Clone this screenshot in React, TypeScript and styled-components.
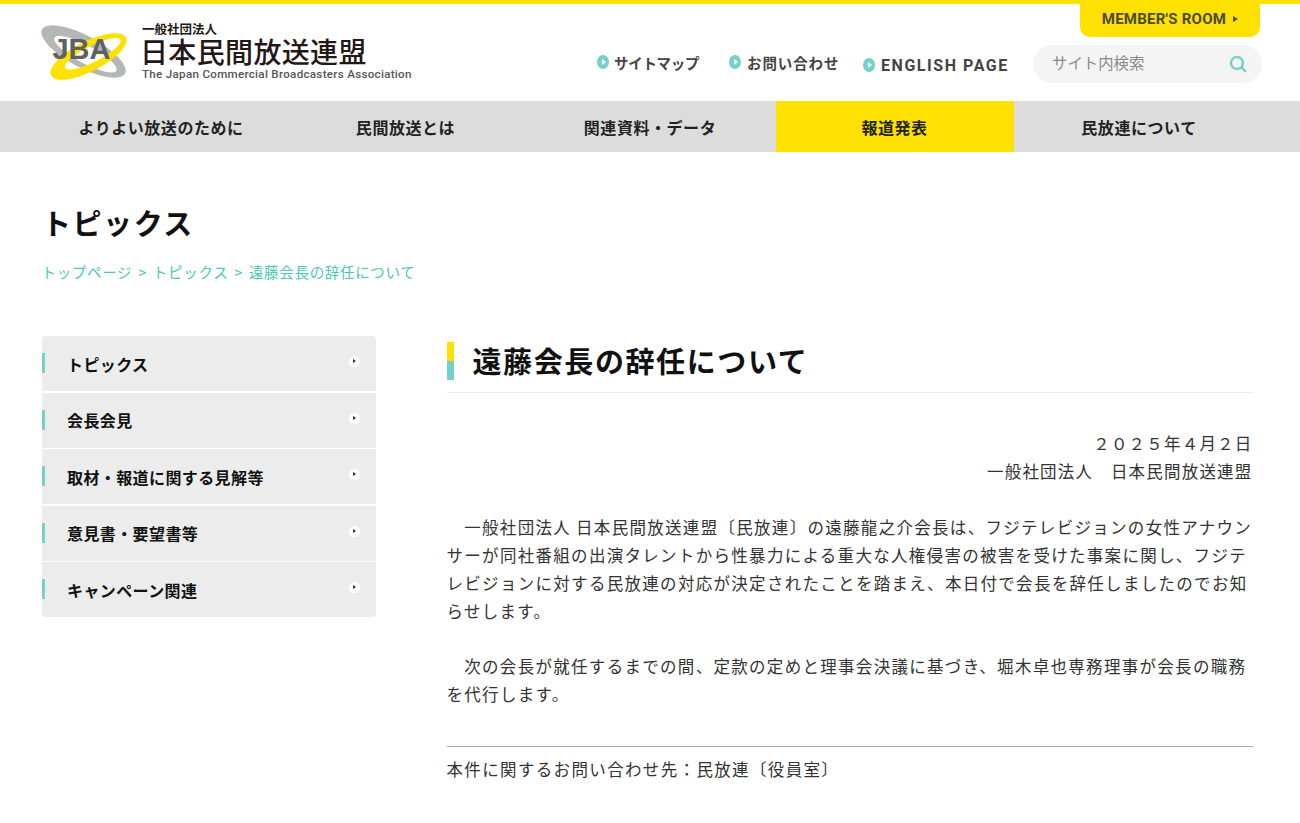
import React from 'react';
import styled, { createGlobalStyle } from 'styled-components';

const Global = createGlobalStyle`
  html, body { margin: 0; padding: 0; background: #fff; }
  body { font-family: "Noto Sans CJK JP", "Noto Sans", sans-serif; color: #333; }
  * { box-sizing: border-box; }
`;
const Page = styled.div`width: 1300px; height: 823px; overflow: hidden; background: #fff;`;
const Header = styled.header`
  height: 101px; border-top: 4px solid #ffe100; padding: 0 38px 0 41px;
  display: flex; justify-content: space-between;
`;
const Logo = styled.a`display: flex; align-items: flex-start; gap: 14px; padding-top: 18px;`;
const LogoText = styled.div`display: flex; flex-direction: column; color: #231815;`;
const LogoSmall = styled.span`font-size: 12.5px; line-height: 14px; font-weight: 700; height: 14px;`;
const LogoMain = styled.span`font-size: 28px; line-height: 30px; font-weight: 500; height: 30px; margin-left: -2px; letter-spacing: .35px;`;
const LogoEn = styled.span`font-family: "Roboto", sans-serif; font-size: 11.6px; line-height: 14px; letter-spacing: .3px; font-weight: 500; color: #555; white-space: nowrap; margin-top: 1px;`;
const Right = styled.div`display: flex; flex-direction: column; align-items: flex-end;`;
const Member = styled.a`
  width: 180px; height: 33px; background: #ffe100; border-radius: 0 0 10px 10px; margin-right: 2px; padding-bottom: 4px;
  display: flex; align-items: center; justify-content: center; gap: 7px;
  font-family: "Roboto", sans-serif; font-weight: 700; font-size: 15px; letter-spacing: .25px; color: #4a4a33;
`;
const Arrow = styled.span`
  width: 0; height: 0; border-left: 5px solid #4a4a33; border-top: 3px solid transparent; border-bottom: 3px solid transparent;
`;
const Utility = styled.div`display: flex; align-items: center; margin-top: 8px;`;
const UtilLink = styled.a<{ $w: number; $en?: boolean; $dy: number; $ls: number; $gap: number }>`
  width: ${p => p.$w}px; display: flex; align-items: center; gap: ${p => p.$gap}px; font-weight: 700; color: #444;
  font-size: ${p => (p.$en ? 16 : 14.5)}px; letter-spacing: ${p => p.$ls}px;
  ${p => p.$en && 'font-family: "Roboto", sans-serif;'}
  transform: translateY(${p => p.$dy}px);
`;
const Bullet = styled.span`
  width: 12px; height: 14px; border-radius: 50%; background: #73d1ca; flex: none; position: relative;
  &::after { content: ""; position: absolute; left: 4.5px; top: 4px; border-left: 4px solid #fff; border-top: 3px solid transparent; border-bottom: 3px solid transparent; }
`;
const Search = styled.div`
  width: 229px; height: 38px; border-radius: 19px; background: #f4f4f4; padding: 0 15px 0 19px;
  display: flex; align-items: center; justify-content: space-between;
  font-size: 15.4px; color: #8a8a8a;
`;
const SearchLabel = styled.span`transform: translateY(-2px);`;
const Nav = styled.nav`
  height: 51px; background: #dcdcdc; padding: 0 42px; display: grid; grid-template-columns: repeat(5, 238px); column-gap: 6.5px;
`;
const NavItem = styled.a<{ $active?: boolean }>`
  display: flex; align-items: center; justify-content: center; font-size: 16px; font-weight: 700; color: #222;
  letter-spacing: .55px; background: ${p => (p.$active ? '#ffe100' : 'transparent')};
`;
const Main = styled.main`padding: 48px 47px 0 42px;`;
const PageTitle = styled.h1`margin: 0; font-size: 29px; line-height: 44px; font-weight: 700; color: #111; letter-spacing: 1.55px;`;
const Crumbs = styled.div`margin-top: 18px; font-size: 14.5px; line-height: 20px; color: #4cc6b6; letter-spacing: .68px; word-spacing: 2px; margin-left: -.5px;`;
const Columns = styled.div`display: grid; grid-template-columns: 334px 806px; column-gap: 71px; margin-top: 54px; margin-left: -.5px;`;
const SideList = styled.ul`
  list-style: none; margin: 0; padding: 0; border-radius: 4px; overflow: hidden; align-self: start;
  display: flex; flex-direction: column; gap: 1.5px;
`;
const SideItem = styled.li`
  height: 55px; background: #ececec; padding-left: 25.5px; padding-right: 16px; position: relative;
  display: flex; align-items: center; justify-content: space-between; font-size: 16px; font-weight: 700; color: #111; letter-spacing: .4px;
  &::before { content: ""; position: absolute; left: 0; top: 17px; width: 3px; height: 20px; background: #73d1ca; }
`;
const SideArrow = styled.span`
  width: 11px; height: 11px; border-radius: 50%; background: #fff; position: relative; transform: translateY(-2px);
  &::after { content: ""; position: absolute; left: 4px; top: 3px; border-left: 3px solid #333; border-top: 2.5px solid transparent; border-bottom: 2.5px solid transparent; }
`;
const Heading = styled.h2`
  margin: 0; height: 57px; border-bottom: 1px solid #eee; padding-left: 26px; position: relative;
  font-size: 29px; line-height: 48px; font-weight: 700; color: #111; letter-spacing: 1.6px;
  &::before { content: ""; position: absolute; left: 0; top: 6px; width: 7px; height: 38px; background: linear-gradient(#ffe100 50%, #73d1ca 50%); }
`;
const Meta = styled.p`margin: 36px 0 28px; text-align: right; font-size: 16.5px; line-height: 28px; letter-spacing: 1.2px; color: #333;`;
const Body = styled.p`margin: 27px 0 0; font-size: 16.5px; line-height: 28px; letter-spacing: 1.3px; color: #333; text-indent: 17.75px;`;
const Contact = styled.p`margin: 38px 0 0; border-top: 1px solid #aaa; padding-top: 8px; font-size: 16.5px; line-height: 28px; letter-spacing: 1.35px; color: #333;`;

const LogoMark = () => (
  <svg width="87" height="60" viewBox="0 0 87 60">
    <g transform="rotate(28 42.5 29.5)">
      <path fillRule="evenodd" fill="#b5b7b6" d="M-4.5 29.5a47 16 0 1 0 94 0a47 16 0 1 0 -94 0zM10.5 31a35 9 0 1 0 70 0a35 9 0 1 0 -70 0z" />
    </g>
    <g transform="rotate(-27 47.5 34.5)">
      <path fillRule="evenodd" fill="#ffe100" d="M5.5 34.5a42 15 0 1 0 84 0a42 15 0 1 0 -84 0zM21.5 34a31 8 0 1 0 62 0a31 8 0 1 0 -62 0z" />
    </g>
    <text x="40.5" y="36.5" textAnchor="middle" fontFamily="Liberation Sans, sans-serif" fontWeight="700" fontSize="29" fill="#5e6062">JBA</text>
  </svg>
);
const SearchIcon = () => (
  <svg width="18" height="18" viewBox="0 0 18 18" fill="none" stroke="#73d1ca" strokeWidth="2.4">
    <circle cx="8" cy="8" r="6" /><path d="M12 12l5 5" />
  </svg>
);

const nav = ['よりよい放送のために', '民間放送とは', '関連資料・データ', '報道発表', '民放連について'];
const side = ['トピックス', '会長会見', '取材・報道に関する見解等', '意見書・要望書等', 'キャンペーン関連'];

export default function App() {
  return (
    <Page>
      <Global />
      <Header>
        <Logo>
          <LogoMark />
          <LogoText>
            <LogoSmall>一般社団法人</LogoSmall>
            <LogoMain>日本民間放送連盟</LogoMain>
            <LogoEn>The Japan Commercial Broadcasters Association</LogoEn>
          </LogoText>
        </Logo>
        <Right>
          <Member>MEMBER'S ROOM <Arrow /></Member>
          <Utility>
            <UtilLink $w={132} $dy={-2} $ls={-.3} $gap={5}><Bullet />サイトマップ</UtilLink>
            <UtilLink $w={134} $dy={-2} $ls={.9} $gap={6}><Bullet />お問い合わせ</UtilLink>
            <UtilLink $w={170} $en $dy={1} $ls={1.55} $gap={6}><Bullet />ENGLISH PAGE</UtilLink>
            <Search><SearchLabel>サイト内検索</SearchLabel><SearchIcon /></Search>
          </Utility>
        </Right>
      </Header>
      <Nav>
        {nav.map((n, i) => <NavItem key={n} $active={i === 3}>{n}</NavItem>)}
      </Nav>
      <Main>
        <PageTitle>トピックス</PageTitle>
        <Crumbs>トップページ &gt; トピックス &gt; 遠藤会長の辞任について</Crumbs>
        <Columns>
          <SideList>
            {side.map(s => <SideItem key={s}><span>{s}</span><SideArrow /></SideItem>)}
          </SideList>
          <article>
            <Heading>遠藤会長の辞任について</Heading>
            <Meta>２０２５年４月２日<br />一般社団法人　日本民間放送連盟</Meta>
            <Body>一般社団法人 日本民間放送連盟〔民放連〕の遠藤龍之介会長は、フジテレビジョンの女性アナウンサーが同社番組の出演タレントから性暴力による重大な人権侵害の被害を受けた事案に関し、フジテレビジョンに対する民放連の対応が決定されたことを踏まえ、本日付で会長を辞任しましたのでお知らせします。</Body>
            <Body>次の会長が就任するまでの間、定款の定めと理事会決議に基づき、堀木卓也専務理事が会長の職務を代行します。</Body>
            <Contact>本件に関するお問い合わせ先：民放連〔役員室〕</Contact>
          </article>
        </Columns>
      </Main>
    </Page>
  );
}
